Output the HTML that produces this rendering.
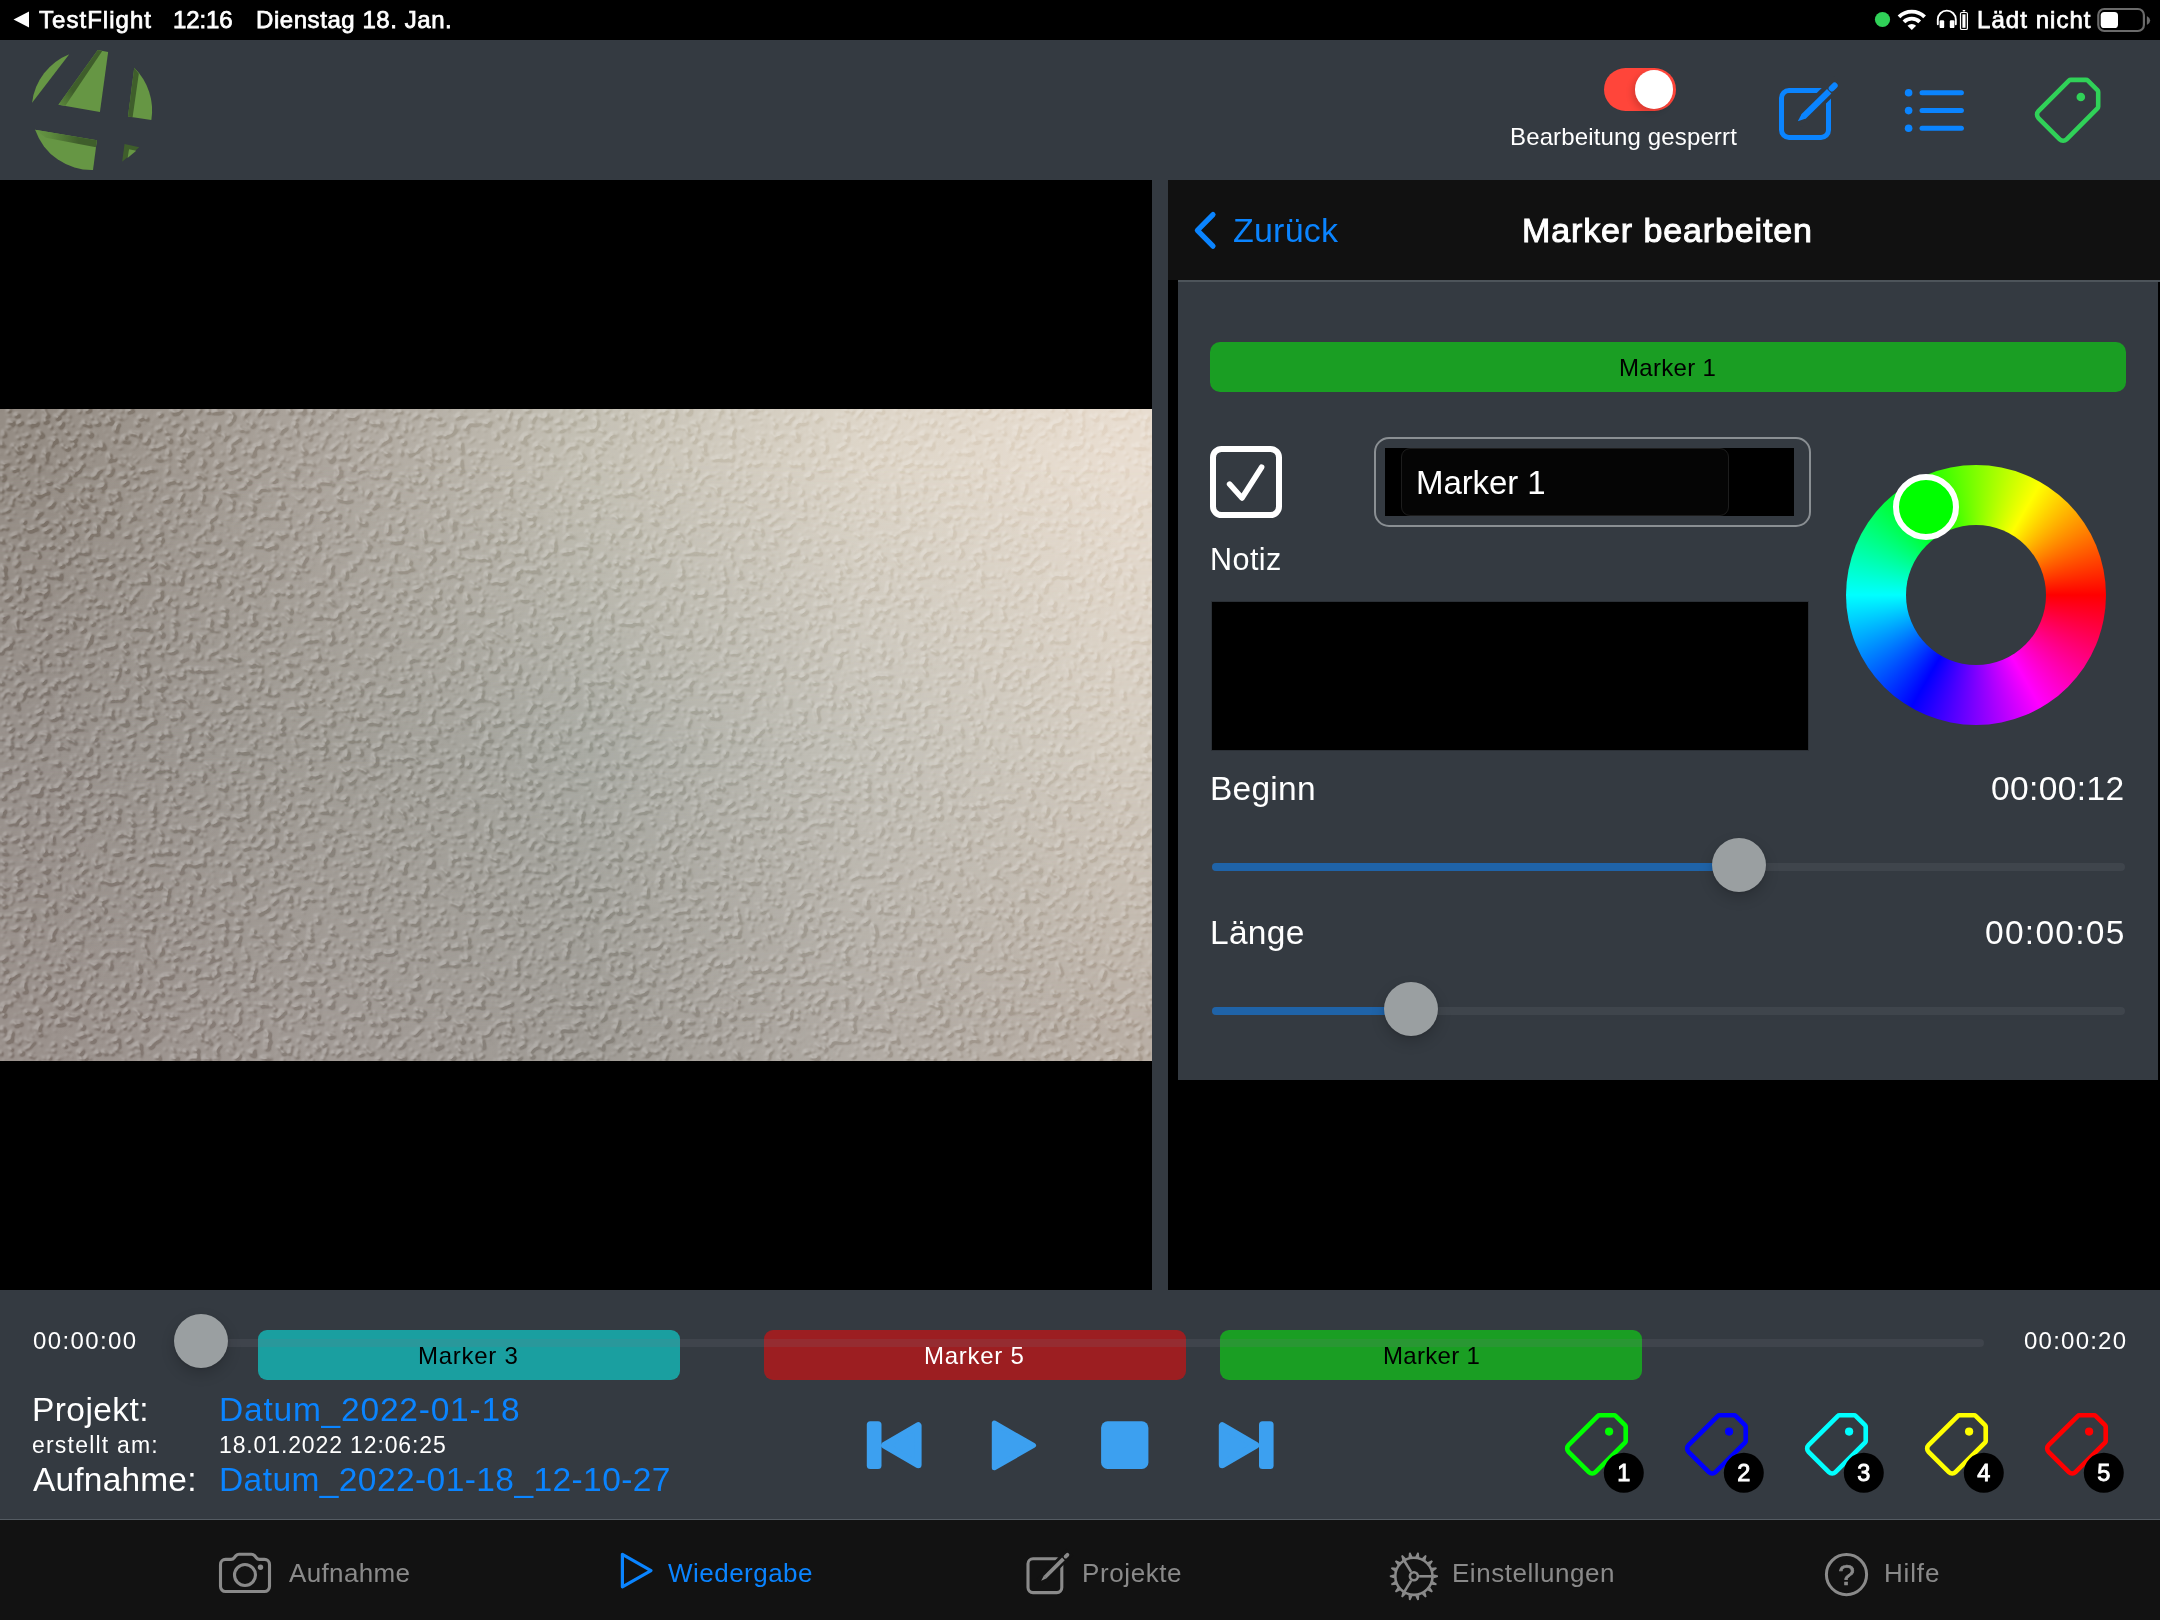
<!DOCTYPE html>
<html lang="de">
<head>
<meta charset="utf-8">
<title>Marker bearbeiten</title>
<style>
*{box-sizing:border-box;margin:0;padding:0}
html,body{width:2160px;height:1620px;overflow:hidden;background:#000}
body{position:relative;font-family:"Liberation Sans",sans-serif;color:#fff}
.abs{position:absolute}
.t{position:absolute;white-space:nowrap;line-height:1;will-change:transform}
svg{position:absolute;overflow:visible}
#status{left:0;top:0;width:2160px;height:40px;background:#000}
#header{left:0;top:40px;width:2160px;height:140px;background:#343a41}
#video{left:0;top:180px;width:1152px;height:1110px;background:#000;overflow:hidden}
#divider{left:1152px;top:180px;width:16px;height:1110px;background:#343a41}
#right{left:1168px;top:180px;width:992px;height:1110px;background:#000}
#nav{left:0;top:0;width:992px;height:100px;background:#111}
#navline{left:10px;top:100px;width:982px;height:1.5px;background:#4d545a}
#panel{left:10px;top:101px;width:980px;height:799px;background:#343a41}
#bottom{left:0;top:1290px;width:2160px;height:230px;background:#343a41}
#tabbar{left:0;top:1520px;width:2160px;height:100px;background:#121212}
.knob{position:absolute;border-radius:50%;background:#9a9fa1;box-shadow:0 6px 14px rgba(0,0,0,.18),0 1px 3px rgba(0,0,0,.12)}
.mk{position:absolute;height:50px;border-radius:9px;top:1330px}
</style>
</head>
<body>
<div id="status" class="abs">
<svg style="left:0;top:0" width="2160" height="40" viewBox="0 0 2160 40"><polygon points="13.5,19.5 29,11.5 29,27.5" fill="#fff"/><circle cx="1882.5" cy="19.5" r="7.6" fill="#30d158"/><g fill="none" stroke="#fff" stroke-width="3.9" stroke-linecap="butt"><path d="M1899,16.8 A18.4,18.4 0 0 1 1924.6,16.8"/><path d="M1903.9,21.8 A11.4,11.4 0 0 1 1919.7,21.8"/></g><path d="M1911.8,30.1 L1907.5,25.7 A6.1,6.1 0 0 1 1916.1,25.7 Z" fill="#fff"/><path d="M1937.8,24.2 V19.6 A9,9 0 0 1 1955.8,19.6 V24.2" fill="none" stroke="#fff" stroke-width="1.9" stroke-linecap="round"/><rect x="1939.6" y="20.3" width="4.6" height="7.8" rx="1.2" fill="#fff"/><rect x="1949.8" y="20.3" width="4.6" height="7.8" rx="1.2" fill="#fff"/><rect x="1960.5" y="12.5" width="6.9" height="17" rx="1.3" fill="none" stroke="#fff" stroke-width="1.2"/><rect x="1962.6" y="9.9" width="2.7" height="1.5" rx="0.6" fill="#fff"/><rect x="1962.4" y="14.3" width="3.1" height="13.5" fill="#fff"/><rect x="2098.3" y="9" width="45.6" height="22" rx="6" fill="none" stroke="#6a6a6a" stroke-width="2.2"/><path d="M2146.9,16.1 Q2150.2,18 2150.2,20.5 Q2150.2,23 2146.9,25 Z" fill="#6a6a6a"/><rect x="2100.7" y="11.9" width="17.3" height="16.1" rx="3.6" fill="#fff"/></svg>
<div class="t" style="left:39.3px;top:7.7px;font-size:24px;letter-spacing:1.03px;-webkit-text-stroke:0.75px #fff;">TestFlight</div>
<div class="t" style="left:173.3px;top:7.7px;font-size:24px;letter-spacing:-0.1px;-webkit-text-stroke:0.75px #fff;">12:16</div>
<div class="t" style="left:256.0px;top:7.7px;font-size:24px;letter-spacing:0.56px;-webkit-text-stroke:0.75px #fff;">Dienstag 18. Jan.</div>
<div class="t" style="left:1976.6px;top:7.7px;font-size:24px;letter-spacing:1.05px;-webkit-text-stroke:0.75px #fff;">Lädt nicht</div>
</div>
<div id="header" class="abs">
<svg style="left:0;top:0" width="2160" height="140" viewBox="0 40 2160 140">
<defs><linearGradient id="lg1" x1="0" y1="0" x2="1" y2="0"><stop offset="0" stop-color="#669644"/><stop offset="0.25" stop-color="#5d8a3d"/><stop offset="0.7" stop-color="#3f5e2b"/><stop offset="1" stop-color="#3f5e2b"/></linearGradient><linearGradient id="lg2" x1="0" y1="1" x2="0.6" y2="0.3"><stop offset="0" stop-color="#5d8a3d"/><stop offset="0.45" stop-color="#3f5e2b"/><stop offset="1" stop-color="#3f5e2b"/></linearGradient></defs>
<g transform="translate(20,40) scale(0.086406)"><path d="M570,165 A693,693 0 0 0 140,725 Z" fill="#669644"/><path d="M900,115 L1020,140 L925,832 L445,750 Z" fill="#669644"/><path d="M900,115 L952,126 L525,762 L445,750 Z" fill="url(#lg2)"/><path d="M1322,322 A693,693 0 0 1 1520,925 L1250,885 Z" fill="#669644"/><path d="M1322,322 L1375,392 L1303,893 L1250,885 Z" fill="#3f5e2b"/><path d="M175,1040 L890,1160 L845,1505 A693,693 0 0 1 175,1040 Z" fill="#669644"/><path d="M175,1040 L890,1160 L878,1242 L300,1130 Z" fill="url(#lg1)"/><path d="M1210,1205 L1380,1240 L1182,1408 Z" fill="#3f5e2b"/><path d="M1262,1265 L1345,1282 L1245,1365 Z" fill="#669644"/></g>
<rect x="1781.5" y="90.5" width="47" height="47" rx="7.5" fill="none" stroke="#0a84ff" stroke-width="5"/><path d="M1839,81 L1797,122" stroke="#343a41" stroke-width="14" fill="none"/><path d="M1829.2,91.2 L1803.5,116.5" stroke="#0a84ff" stroke-width="6.2" fill="none"/><path d="M1801.6,114 L1806,118.6 L1797.8,121.2 Z" fill="#0a84ff"/><path d="M1834.6,85.6 L1831.8,88.4" stroke="#0a84ff" stroke-width="6.2" stroke-linecap="round" fill="none"/><circle cx="1908.6" cy="92.8" r="3.8" fill="#0a84ff"/><path d="M1922,92.8 H1961.4" stroke="#0a84ff" stroke-width="5" stroke-linecap="round"/><circle cx="1908.6" cy="110.6" r="3.8" fill="#0a84ff"/><path d="M1922,110.6 H1961.4" stroke="#0a84ff" stroke-width="5" stroke-linecap="round"/><circle cx="1908.6" cy="128.3" r="3.8" fill="#0a84ff"/><path d="M1922,128.3 H1961.4" stroke="#0a84ff" stroke-width="5" stroke-linecap="round"/><g transform="translate(1860,50) scale(0.138889)"><path d="M1518,215 H1627 Q1635,215 1640.7,220.7 L1709.3,289.3 Q1715,295 1715,303 V407 Q1715,415 1709.3,420.7 L1487.25,642.75 A35,35 0 0 1 1437.75,642.75 L1284.75,489.75 A35,35 0 0 1 1284.75,440.25 L1504.3,220.7 Q1510,215 1518,215 Z" fill="none" stroke="#30d158" stroke-width="33" stroke-linejoin="round"/><circle cx="1590" cy="338" r="31" fill="#30d158"/></g>
</svg>
<div class="abs" style="left:1604px;top:28px;width:72px;height:43px;border-radius:22px;background:#ff453a"></div><div class="abs" style="left:1634.6px;top:30.2px;width:38.6px;height:38.6px;border-radius:50%;background:#fff;box-shadow:-3px 3px 6px rgba(0,0,0,.15)"></div>
<div class="t" style="left:1510.4px;top:84.7px;font-size:24px;letter-spacing:0.14px;">Bearbeitung gesperrt</div>
</div>
<div id="video" class="abs">
<div class="abs" style="left:0;top:229px;width:1152px;height:652px;overflow:hidden;background:linear-gradient(to right,rgb(152,145,140) 4.3%,rgb(160,156,149) 27.8%,rgb(169,170,163) 51.2%,rgb(196,193,184) 74.7%,rgb(212,204,192) 97.2%)">
<div class="abs" style="left:0;top:0;width:1152px;height:652px;background:linear-gradient(to right,rgb(148,140,132) 4.3%,rgb(171,164,156) 27.8%,rgb(196,192,180) 51.2%,rgb(221,213,200) 74.7%,rgb(232,221,208) 97.2%);-webkit-mask-image:linear-gradient(to bottom,#000 51px,transparent 341px);mask-image:linear-gradient(to bottom,#000 51px,transparent 341px)"></div>
<div class="abs" style="left:0;top:0;width:1152px;height:652px;background:linear-gradient(to right,rgb(153,144,139) 4.3%,rgb(160,153,148) 27.8%,rgb(158,154,148) 51.2%,rgb(176,170,163) 74.7%,rgb(184,174,164) 97.2%);-webkit-mask-image:linear-gradient(to bottom,transparent 341px,#000 621px);mask-image:linear-gradient(to bottom,transparent 341px,#000 621px)"></div>
<svg style="left:0;top:0;mix-blend-mode:overlay;opacity:.25" width="1152" height="652" viewBox="0 0 1152 652"><filter id="wall" x="0" y="0" width="100%" height="100%" color-interpolation-filters="sRGB"><feTurbulence type="fractalNoise" baseFrequency="0.14 0.17" numOctaves="2" seed="11" result="n"/><feComponentTransfer in="n" result="b"><feFuncA type="table" tableValues="0 0 0 0 0 0.02 0.5 1 1 1"/></feComponentTransfer><feGaussianBlur in="b" stdDeviation="1.3" result="bb"/><feDiffuseLighting in="bb" surfaceScale="2.2" diffuseConstant="1" lighting-color="#fff" result="l"><feDistantLight azimuth="225" elevation="50"/></feDiffuseLighting><feColorMatrix in="l" type="matrix" values="1.6 0 0 0 -0.700  0 1.6 0 0 -0.700  0 0 1.6 0 -0.700  0 0 0 0 1"/></filter><rect width="1152" height="652" filter="url(#wall)"/></svg>
</div>
</div>
<div id="divider" class="abs"></div>
<div id="right" class="abs">
<div id="nav" class="abs"></div>
<div id="panel" class="abs"></div>
<div id="navline" class="abs"></div>
</div>
<div id="rcontent" class="abs" style="left:0;top:0;width:2160px;height:1290px">
<svg style="left:1180px;top:200px" width="60" height="60" viewBox="1180 200 60 60"><path d="M1213,214.6 L1197.4,230.4 L1213,246.2" fill="none" stroke="#0a84ff" stroke-width="5.2" stroke-linecap="round" stroke-linejoin="round"/></svg>
<div class="t" style="left:1232.6px;top:213.0px;font-size:34px;letter-spacing:0.22px;color:#0a84ff;">Zurück</div>
<div class="t" style="left:1521.8px;top:213.4px;font-size:34px;letter-spacing:0.88px;-webkit-text-stroke:1px #fff;">Marker bearbeiten</div>
<div class="abs" style="left:1210px;top:342px;width:916px;height:50px;border-radius:10px;background:#1a9e23"></div>
<div class="t" style="left:1619.4px;top:356.1px;font-size:24px;letter-spacing:0.3px;color:#000;">Marker 1</div>
<div class="abs" style="left:1210px;top:446px;width:72px;height:72px;border:6.3px solid #fff;border-radius:11.5px"></div>
<svg style="left:1210px;top:446px" width="72" height="72" viewBox="1210 446 72 72"><path d="M1229.6,484.2 L1242,498 L1261.6,467.2" fill="none" stroke="#fff" stroke-width="5.6" stroke-linejoin="round" stroke-linecap="round"/></svg>
<div class="abs" style="left:1374px;top:436.8px;width:436.5px;height:89.8px;border:2px solid #8a8f93;border-radius:15px"></div>
<div class="abs" style="left:1384.6px;top:448px;width:409.4px;height:67.7px;background:#000"></div>
<div class="abs" style="left:1401px;top:448px;width:328.3px;height:67.7px;background:#050505;border:1px solid #1d1d1d;border-radius:9px"></div>
<div class="t" style="left:1415.5px;top:466.2px;font-size:33px;letter-spacing:-0.1px;">Marker 1</div>
<div class="t" style="left:1209.6px;top:544.2px;font-size:30.5px;letter-spacing:0.45px;">Notiz</div>
<div class="abs" style="left:1211px;top:601px;width:597.7px;height:150px;background:#000;border:1px solid #2b3036"></div>
<div class="abs" style="left:1846px;top:465px;width:260px;height:260px;border-radius:50%;background:conic-gradient(from 90deg,#f00,#f0f,#00f,#0ff,#0f0,#ff0,#f00)"></div>
<div class="abs" style="left:1906px;top:525px;width:140px;height:140px;border-radius:50%;background:#343a41"></div>
<div class="abs" style="left:1892.8px;top:474.4px;width:66px;height:66px;border-radius:50%;background:#0f0;border:6px solid #fff"></div>
<div class="t" style="left:1209.8px;top:772.0px;font-size:33.5px;letter-spacing:0.24px;">Beginn</div>
<div class="t" style="left:1991.4px;top:772.0px;font-size:33.5px;letter-spacing:0.4px;">00:00:12</div>
<div class="abs" style="left:1212px;top:863px;width:912.6px;height:8px;border-radius:4px;background:#3f454c"></div>
<div class="abs" style="left:1212px;top:863px;width:520px;height:8px;border-radius:4px;background:#1f63a8"></div>
<div class="knob" style="left:1711.8px;top:837.7px;width:54px;height:54px"></div>
<div class="t" style="left:1209.6px;top:916.1px;font-size:33.5px;letter-spacing:0.3px;">Länge</div>
<div class="t" style="left:1985.3px;top:916.1px;font-size:33.5px;letter-spacing:1.27px;">00:00:05</div>
<div class="abs" style="left:1212px;top:1007px;width:912.6px;height:8px;border-radius:4px;background:#3f454c"></div>
<div class="abs" style="left:1212px;top:1007px;width:190px;height:8px;border-radius:4px;background:#1f63a8"></div>
<div class="knob" style="left:1383.8px;top:982px;width:54px;height:54px"></div>
</div>
<div id="bottom" class="abs"></div>
<div id="bcontent" class="abs" style="left:0;top:0;width:2160px;height:1620px">
<div class="t" style="left:32.7px;top:1329.0px;font-size:24px;letter-spacing:1.37px;">00:00:00</div>
<div class="t" style="left:2024.0px;top:1329.0px;font-size:24px;letter-spacing:1.23px;">00:00:20</div>
<div class="mk" style="left:258.3px;width:421.7px;background:#1a9fa0"></div>
<div class="mk" style="left:764px;width:422px;background:#9c1e21"></div>
<div class="mk" style="left:1220px;width:422px;background:#1a9e23"></div>
<div class="abs" style="left:178px;top:1339px;width:1806px;height:8px;border-radius:4px;background:rgba(120,120,128,.17)"></div>
<div class="knob" style="left:174px;top:1314px;width:54px;height:54px"></div>
<div class="t" style="left:417.6px;top:1343.7px;font-size:24px;letter-spacing:0.72px;color:#000;">Marker 3</div>
<div class="t" style="left:924.4px;top:1343.7px;font-size:24px;letter-spacing:0.72px;">Marker 5</div>
<div class="t" style="left:1383.0px;top:1343.7px;font-size:24px;letter-spacing:0.3px;color:#000;">Marker 1</div>
<div class="t" style="left:32.3px;top:1393.3px;font-size:33.5px;letter-spacing:0.43px;">Projekt:</div>
<div class="t" style="left:218.9px;top:1393.3px;font-size:33.5px;letter-spacing:0.79px;color:#0a84ff;">Datum_2022-01-18</div>
<div class="t" style="left:31.5px;top:1434.1px;font-size:23px;letter-spacing:1.2px;">erstellt am:</div>
<div class="t" style="left:218.6px;top:1434.1px;font-size:23px;letter-spacing:0.87px;">18.01.2022 12:06:25</div>
<div class="t" style="left:32.7px;top:1463.3px;font-size:33.5px;letter-spacing:0.18px;">Aufnahme:</div>
<div class="t" style="left:218.9px;top:1463.3px;font-size:33.5px;letter-spacing:0.42px;color:#0a84ff;">Datum_2022-01-18_12-10-27</div>
<svg style="left:840px;top:1400px" width="460" height="100" viewBox="840 1400 460 100"><g fill="#3ca0f0" stroke="#3ca0f0" stroke-width="7" stroke-linejoin="round"><polygon points="918.1,1425.7 918.1,1464.7 884.6,1445.2"/><polygon points="1222.3,1425.7 1222.3,1464.7 1255.8,1445.2"/></g><polygon points="994.3,1423 994.3,1467.8 1033.6,1445.4" fill="#3ca0f0" stroke="#3ca0f0" stroke-width="5" stroke-linejoin="round"/><rect x="866.8" y="1421.3" width="14.7" height="47.7" rx="3.5" fill="#3ca0f0"/><rect x="1101.1" y="1421.3" width="47.3" height="47.7" rx="6.5" fill="#3ca0f0"/><rect x="1259" y="1421.3" width="14.6" height="47.7" rx="3.5" fill="#3ca0f0"/></svg>
<svg style="left:1540px;top:1390px" width="620" height="130" viewBox="1540 1390 620 130"><g transform="translate(1397.8,1386.7) scale(0.1329)"><path d="M1518,215 H1627 Q1635,215 1640.7,220.7 L1709.3,289.3 Q1715,295 1715,303 V407 Q1715,415 1709.3,420.7 L1487.25,642.75 A35,35 0 0 1 1437.75,642.75 L1284.75,489.75 A35,35 0 0 1 1284.75,440.25 L1504.3,220.7 Q1510,215 1518,215 Z" fill="none" stroke="#00ff00" stroke-width="35" stroke-linejoin="round"/><circle cx="1590" cy="338" r="31" fill="#00ff00"/></g><circle cx="1623.8" cy="1472.8" r="20" fill="#000"/><text x="1623.8" y="1481.3" text-anchor="middle" font-family="Liberation Sans, sans-serif" font-size="23.5" fill="#fff" stroke="#fff" stroke-width="0.9">1</text><g transform="translate(1517.8,1386.7) scale(0.1329)"><path d="M1518,215 H1627 Q1635,215 1640.7,220.7 L1709.3,289.3 Q1715,295 1715,303 V407 Q1715,415 1709.3,420.7 L1487.25,642.75 A35,35 0 0 1 1437.75,642.75 L1284.75,489.75 A35,35 0 0 1 1284.75,440.25 L1504.3,220.7 Q1510,215 1518,215 Z" fill="none" stroke="#0000ff" stroke-width="35" stroke-linejoin="round"/><circle cx="1590" cy="338" r="31" fill="#0000ff"/></g><circle cx="1743.8" cy="1472.8" r="20" fill="#000"/><text x="1743.8" y="1481.3" text-anchor="middle" font-family="Liberation Sans, sans-serif" font-size="23.5" fill="#fff" stroke="#fff" stroke-width="0.9">2</text><g transform="translate(1637.8,1386.7) scale(0.1329)"><path d="M1518,215 H1627 Q1635,215 1640.7,220.7 L1709.3,289.3 Q1715,295 1715,303 V407 Q1715,415 1709.3,420.7 L1487.25,642.75 A35,35 0 0 1 1437.75,642.75 L1284.75,489.75 A35,35 0 0 1 1284.75,440.25 L1504.3,220.7 Q1510,215 1518,215 Z" fill="none" stroke="#00ffff" stroke-width="35" stroke-linejoin="round"/><circle cx="1590" cy="338" r="31" fill="#00ffff"/></g><circle cx="1863.8" cy="1472.8" r="20" fill="#000"/><text x="1863.8" y="1481.3" text-anchor="middle" font-family="Liberation Sans, sans-serif" font-size="23.5" fill="#fff" stroke="#fff" stroke-width="0.9">3</text><g transform="translate(1757.8,1386.7) scale(0.1329)"><path d="M1518,215 H1627 Q1635,215 1640.7,220.7 L1709.3,289.3 Q1715,295 1715,303 V407 Q1715,415 1709.3,420.7 L1487.25,642.75 A35,35 0 0 1 1437.75,642.75 L1284.75,489.75 A35,35 0 0 1 1284.75,440.25 L1504.3,220.7 Q1510,215 1518,215 Z" fill="none" stroke="#ffff00" stroke-width="35" stroke-linejoin="round"/><circle cx="1590" cy="338" r="31" fill="#ffff00"/></g><circle cx="1983.8" cy="1472.8" r="20" fill="#000"/><text x="1983.8" y="1481.3" text-anchor="middle" font-family="Liberation Sans, sans-serif" font-size="23.5" fill="#fff" stroke="#fff" stroke-width="0.9">4</text><g transform="translate(1877.8,1386.7) scale(0.1329)"><path d="M1518,215 H1627 Q1635,215 1640.7,220.7 L1709.3,289.3 Q1715,295 1715,303 V407 Q1715,415 1709.3,420.7 L1487.25,642.75 A35,35 0 0 1 1437.75,642.75 L1284.75,489.75 A35,35 0 0 1 1284.75,440.25 L1504.3,220.7 Q1510,215 1518,215 Z" fill="none" stroke="#ff0000" stroke-width="35" stroke-linejoin="round"/><circle cx="1590" cy="338" r="31" fill="#ff0000"/></g><circle cx="2103.8" cy="1472.8" r="20" fill="#000"/><text x="2103.8" y="1481.3" text-anchor="middle" font-family="Liberation Sans, sans-serif" font-size="23.5" fill="#fff" stroke="#fff" stroke-width="0.9">5</text></svg>
</div>
<div id="tabbar" class="abs"></div>
<div class="abs" style="left:0;top:1519px;width:2160px;height:1px;background:#545b62"></div>
<div id="tcontent" class="abs" style="left:0;top:0;width:2160px;height:1620px">
<svg style="left:0;top:1520px" width="2160" height="100" viewBox="0 1520 2160 100"><g fill="none" stroke="#8a8a8a" stroke-width="3.1" stroke-linejoin="round"><path d="M225.5,1559.4 H231 Q233,1559.4 234.2,1557.8 L236,1555.6 Q237.2,1554.3 239,1554.3 H251.5 Q253.3,1554.3 254.5,1555.6 L256.3,1557.8 Q257.5,1559.4 259.5,1559.4 H264.5 A5,5 0 0 1 269.5,1564.4 V1586.5 A5,5 0 0 1 264.5,1591.5 H225.5 A5,5 0 0 1 220.5,1586.5 V1564.4 A5,5 0 0 1 225.5,1559.4 Z"/><circle cx="245" cy="1575" r="10.5"/></g><circle cx="260.5" cy="1567.2" r="2.7" fill="#8a8a8a"/><polygon points="622.4,1554.4 622.4,1586.8 651,1570.6" fill="none" stroke="#0a84ff" stroke-width="3.2" stroke-linejoin="round"/><rect x="1028" y="1558.8" width="33.8" height="33.8" rx="5" fill="none" stroke="#8a8a8a" stroke-width="3.1"/><path d="M1070,1552 L1040,1582" stroke="#121212" stroke-width="9" fill="none"/><path d="M1063.4,1558.8 L1045.2,1577" stroke="#8a8a8a" stroke-width="3.8" fill="none"/><path d="M1043.9,1575.5 L1046.7,1578.3 L1041.2,1580.8 Z" fill="#8a8a8a"/><path d="M1067.4,1554.8 L1065.6,1556.6" stroke="#8a8a8a" stroke-width="3.8" stroke-linecap="round" fill="none"/><g fill="none" stroke="#8a8a8a" stroke-width="2.6"><circle cx="1413.9" cy="1576.3" r="18.6"/><circle cx="1413.9" cy="1576.3" r="4"/><path d="M1419.1,1576.3 L1431.9,1576.3"/><path d="M1411.1,1580.7 L1404.4,1591.6"/><path d="M1411.1,1571.9 L1404.4,1561.0"/></g><path d="M1433.19,1574.20 L1437.99,1575.50 L1437.99,1577.10 L1433.19,1578.40 Z M1432.74,1580.93 L1436.81,1583.79 L1436.26,1585.29 L1431.31,1584.87 Z M1430.02,1587.09 L1432.87,1591.17 L1431.84,1592.39 L1427.33,1590.30 Z M1425.36,1591.96 L1426.64,1596.76 L1425.25,1597.56 L1421.73,1594.05 Z M1419.31,1594.93 L1418.87,1599.88 L1417.30,1600.16 L1415.19,1595.66 Z M1412.61,1595.66 L1410.50,1600.16 L1408.93,1599.88 L1408.49,1594.93 Z M1406.07,1594.05 L1402.55,1597.56 L1401.16,1596.76 L1402.44,1591.96 Z M1400.47,1590.30 L1395.96,1592.39 L1394.93,1591.17 L1397.78,1587.09 Z M1396.49,1584.87 L1391.54,1585.29 L1390.99,1583.79 L1395.06,1580.93 Z M1394.61,1578.40 L1389.81,1577.10 L1389.81,1575.50 L1394.61,1574.20 Z M1395.06,1571.67 L1390.99,1568.81 L1391.54,1567.31 L1396.49,1567.73 Z M1397.78,1565.51 L1394.93,1561.43 L1395.96,1560.21 L1400.47,1562.30 Z M1402.44,1560.64 L1401.16,1555.84 L1402.55,1555.04 L1406.07,1558.55 Z M1408.49,1557.67 L1408.93,1552.72 L1410.50,1552.44 L1412.61,1556.94 Z M1415.19,1556.94 L1417.30,1552.44 L1418.87,1552.72 L1419.31,1557.67 Z M1421.73,1558.55 L1425.25,1555.04 L1426.64,1555.84 L1425.36,1560.64 Z M1427.33,1562.30 L1431.84,1560.21 L1432.87,1561.43 L1430.02,1565.51 Z M1431.31,1567.73 L1436.26,1567.31 L1436.81,1568.81 L1432.74,1571.67 Z " fill="#8a8a8a"/><circle cx="1846.5" cy="1574.6" r="20.1" fill="none" stroke="#8a8a8a" stroke-width="3"/><text x="1846.7" y="1585.4" text-anchor="middle" font-family="Liberation Sans, sans-serif" font-size="30" fill="#8a8a8a" stroke="#8a8a8a" stroke-width="0.7">?</text></svg>
<div class="t" style="left:288.9px;top:1560.0px;font-size:26px;letter-spacing:0.35px;color:#8a8a8a;">Aufnahme</div>
<div class="t" style="left:668.0px;top:1560.0px;font-size:26px;letter-spacing:0.48px;color:#0a84ff;">Wiedergabe</div>
<div class="t" style="left:1082.4px;top:1560.0px;font-size:26px;letter-spacing:0.6px;color:#8a8a8a;">Projekte</div>
<div class="t" style="left:1452.4px;top:1560.0px;font-size:26px;letter-spacing:0.52px;color:#8a8a8a;">Einstellungen</div>
<div class="t" style="left:1883.6px;top:1560.0px;font-size:26px;letter-spacing:0.84px;color:#8a8a8a;">Hilfe</div>
</div>
</body>
</html>
